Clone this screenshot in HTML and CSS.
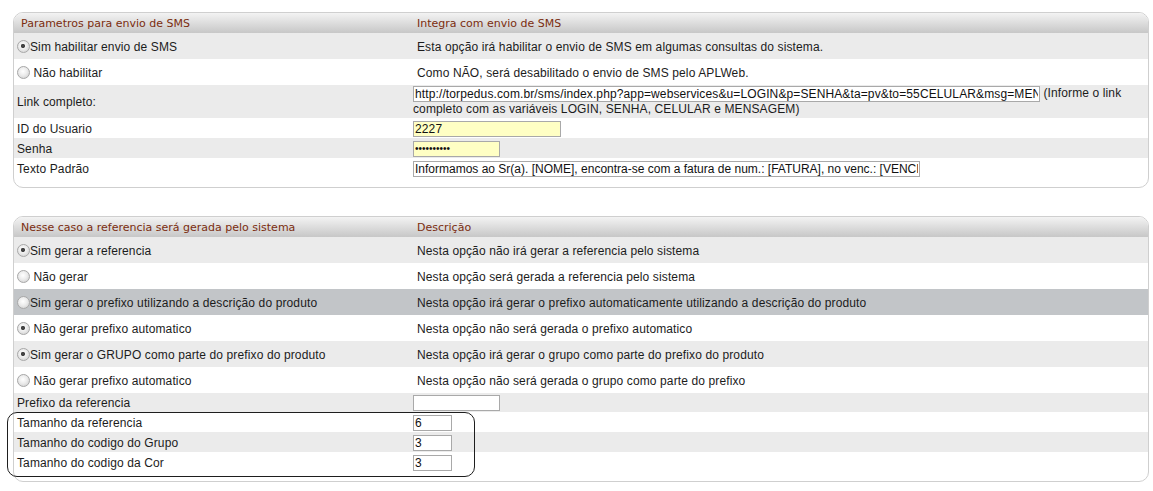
FILE: index.html
```html
<!DOCTYPE html>
<html lang="pt-BR">
<head>
<meta charset="utf-8">
<title>Parametros SMS</title>
<link rel="stylesheet" href="styles.css">
</head>
<body>
<div class="section">
  <div class="panel">
    <table class="grid">
      <colgroup><col class="c1"><col></colgroup>
      <thead>
        <tr class="head"><th>Parametros para envio de SMS</th><th class="th2">Integra com envio de SMS</th></tr>
      </thead>
      <tbody>
        <tr class="rr alt"><td><input type="radio" name="sms" checked>Sim habilitar envio de SMS</td><td class="desc">Esta opção irá habilitar o envio de SMS em algumas consultas do sistema.</td></tr>
        <tr class="rr"><td><input type="radio" name="sms"> Não habilitar</td><td class="desc">Como NÃO, será desabilitado o envio de SMS pelo APLWeb.</td></tr>
        <tr class="link alt"><td>Link completo:</td><td class="top"><input class="in w-link" type="text" value="http://torpedus.com.br/sms/index.php?app=webservices&amp;u=LOGIN&amp;p=SENHA&amp;ta=pv&amp;to=55CELULAR&amp;msg=MENSAGEM"> (Informe o link completo com as variáveis LOGIN, SENHA, CELULAR e MENSAGEM)</td></tr>
        <tr class="lr"><td>ID do Usuario</td><td><input class="in yellow w-id" type="text" value="2227"></td></tr>
        <tr class="lr alt"><td>Senha</td><td><input class="in yellow w-sm pw" type="password" value="1234567890"></td></tr>
        <tr class="lr"><td>Texto Padrão</td><td><input class="in w-txt tight" type="text" value="Informamos ao Sr(a). [NOME], encontra-se com a fatura de num.: [FATURA], no venc.: [VENCIMENTO]"></td></tr>
      </tbody>
    </table>
  </div>
</div>

<div class="section second">
  <div class="panel">
    <table class="grid">
      <colgroup><col class="c1"><col></colgroup>
      <thead>
        <tr class="head"><th>Nesse caso a referencia será gerada pelo sistema</th><th class="th2">Descrição</th></tr>
      </thead>
      <tbody>
        <tr class="rr alt"><td><input type="radio" name="ref" checked>Sim gerar a referencia</td><td class="desc">Nesta opção não irá gerar a referencia pelo sistema</td></tr>
        <tr class="rr"><td><input type="radio" name="ref"> Não gerar</td><td class="desc">Nesta opção será gerada a referencia pelo sistema</td></tr>
        <tr class="rr hover"><td><input type="radio" name="pre">Sim gerar o prefixo utilizando a descrição do produto</td><td class="desc">Nesta opção irá gerar o prefixo automaticamente utilizando a descrição do produto</td></tr>
        <tr class="rr"><td><input type="radio" name="pre" checked> Não gerar prefixo automatico</td><td class="desc">Nesta opção não será gerada o prefixo automatico</td></tr>
        <tr class="rr alt"><td><input type="radio" name="grp" checked>Sim gerar o GRUPO como parte do prefixo do produto</td><td class="desc">Nesta opção irá gerar o grupo como parte do prefixo do produto</td></tr>
        <tr class="rr"><td><input type="radio" name="grp"> Não gerar prefixo automatico</td><td class="desc">Nesta opção não será gerada o grupo como parte do prefixo</td></tr>
        <tr class="lr short alt"><td>Prefixo da referencia</td><td><input class="in w-sm" type="text" value=""></td></tr>
        <tr class="lr"><td>Tamanho da referencia</td><td><input class="in w-num" type="text" value="6"></td></tr>
        <tr class="lr alt"><td>Tamanho do codigo do Grupo</td><td><input class="in w-num" type="text" value="3"></td></tr>
        <tr class="lr"><td>Tamanho do codigo da Cor</td><td><input class="in w-num" type="text" value="3"></td></tr>
      </tbody>
    </table>
  </div>
  <div class="mark"></div>
</div>
</body>
</html>
```
FILE: styles.css
```css
html, body {
  margin: 0;
  padding: 0;
  background: #ffffff;
}
body {
  padding: 12px 4px 0 13px;
  font-family: "Liberation Sans", Arial, sans-serif;
  font-size: 12px;
  letter-spacing: 0.12px;
  color: #1c1c1c;
}
.section {
  position: relative;
}
.second {
  margin-top: 28px;
}
.panel {
  border: 1px solid #cfcfcf;
  border-radius: 10px;
  overflow: hidden;
  padding-bottom: 9px;
  background: #ffffff;
}
.grid {
  width: 100%;
  border-collapse: collapse;
  table-layout: fixed;
}
.c1 {
  width: 396px;
}
.head th {
  height: 20px;
  padding: 0 0 0 7px;
  text-align: left;
  font-family: "DejaVu Sans", Verdana, sans-serif;
  font-size: 11px;
  font-weight: normal;
  letter-spacing: 0;
  color: #7b2d0f;
  background: linear-gradient(#f3f3f3, #c7c7c7);
  vertical-align: middle;
}
.head .th2 {
  padding-left: 7px;
}
.grid td {
  padding: 1px 3px 0;
  vertical-align: middle;
  line-height: 14px;
  white-space: nowrap;
}
.grid td.desc {
  padding-left: 7px;
}
.grid td.top {
  vertical-align: top;
  padding-top: 1px;
  white-space: normal;
}
.rr { height: 26px; }
.lr { height: 20px; }
.lr.short { height: 19px; }
.link { height: 33px; }
.alt { background: #ebebeb; }
.hover { background: #c2c5c8; }

input[type="radio"] {
  -webkit-appearance: none;
  appearance: none;
  width: 13px;
  height: 13px;
  margin: 0;
  vertical-align: -2px;
  border: 1px solid #a8a8a8;
  border-radius: 50%;
  background: radial-gradient(circle at 45% 40%, #ffffff 0, #ececec 45%, #c9c9c9 100%);
  box-sizing: border-box;
}
input[type="radio"]:checked {
  background:
    radial-gradient(circle at 45% 45%, #444444 0, #444444 1.8px, rgba(0,0,0,0) 2.4px),
    radial-gradient(circle at 45% 40%, #ffffff 0, #ececec 45%, #c9c9c9 100%);
}

.in {
  box-sizing: border-box;
  height: 16px;
  margin: 0;
  padding: 0 1px;
  border: 1px solid #a9a9a9;
  font-family: "Liberation Sans", Arial, sans-serif;
  font-size: 12px;
  letter-spacing: 0.12px;
  color: #111111;
  background: #ffffff;
  vertical-align: middle;
  outline: none;
}
.in.tight { letter-spacing: 0; }
.top .in { vertical-align: top; }
.yellow { background: #ffffc4; }
.pw { font-size: 10px; letter-spacing: 0; }
.w-link { width: 627px; }
.w-id { width: 148px; }
.w-sm { width: 87px; }
.w-txt { width: 507px; }
.w-num { width: 39px; }

.mark {
  position: absolute;
  left: -6px;
  top: 196px;
  width: 466px;
  height: 63px;
  border: 1px solid #1e1e1e;
  border-radius: 10px;
  pointer-events: none;
}
```
